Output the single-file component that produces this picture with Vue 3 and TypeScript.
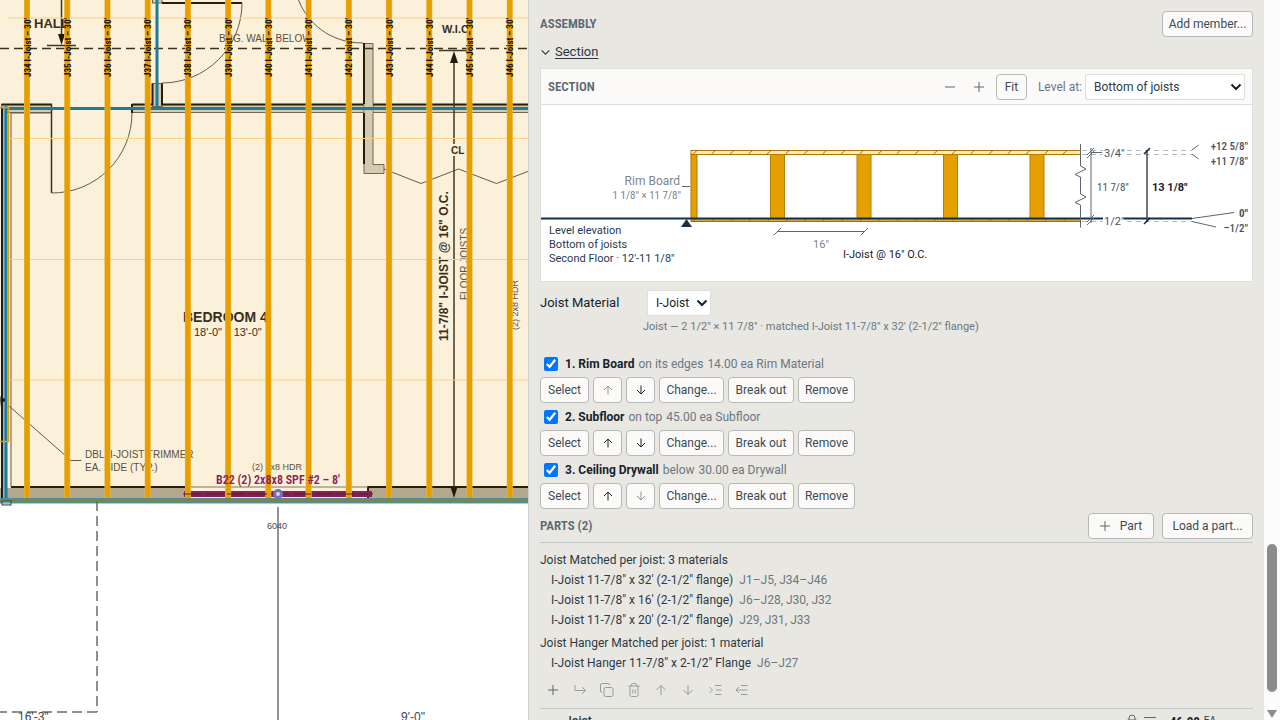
<script setup lang="ts">
import { ref } from 'vue'

interface Member {
  name: string
  position: string
  quantity: string
  enabled: boolean
}

interface Match {
  material: string
  joists: string
}

const joists = Array.from({ length: 13 }, (_, i) => ({ x: 27 + i * 40.23, label: `J${34 + i} I-Joist – 30'` }))
const gridLines = [18, 138.5, 259.5, 380]
const sectionJoists = [770.5, 857, 943.5, 1030]
const hatches = Array.from({ length: 21 }, (_, i) => 693 + i * 18.5)

const levels = ['Bottom of joists', 'Top of joists', 'Top of subfloor']
const level = ref(levels[0])
const material = ref('I-Joist')
const sectionOpen = ref(true)

const members = ref<Member[]>([
  { name: 'Rim Board', position: 'on its edges', quantity: '14.00 ea Rim Material', enabled: true },
  { name: 'Subfloor', position: 'on top', quantity: '45.00 ea Subfloor', enabled: true },
  { name: 'Ceiling Drywall', position: 'below', quantity: '30.00 ea Drywall', enabled: true },
])

const joistMatches: Match[] = [
  { material: `I-Joist 11-7/8" x 32' (2-1/2" flange)`, joists: 'J1–J5, J34–J46' },
  { material: `I-Joist 11-7/8" x 16' (2-1/2" flange)`, joists: 'J6–J28, J30, J32' },
  { material: `I-Joist 11-7/8" x 20' (2-1/2" flange)`, joists: 'J29, J31, J33' },
]

const tools = [
  { name: 'Add', d: 'M8 3v10M3 8h10' },
  { name: 'Add child', d: 'M3 3v5.5h10.5M10 5l3.5 3.5-3.5 3.5' },
  { name: 'Duplicate', d: 'M6.5 5.5h6a1.5 1.5 0 0 1 1.5 1.5v6a1.5 1.5 0 0 1-1.5 1.5h-6a1.5 1.5 0 0 1-1.5-1.5v-6a1.5 1.5 0 0 1 1.5-1.5zM3 10.5a1.5 1.5 0 0 1-1.5-1.5V3A1.5 1.5 0 0 1 3 1.5h6a1.5 1.5 0 0 1 1.5 1.5' },
  { name: 'Delete', d: 'M2.5 4h11M4 4v9a1.5 1.5 0 0 0 1.5 1.5h5A1.5 1.5 0 0 0 12 13V4M5.5 4V2.8A1.3 1.3 0 0 1 6.8 1.5h2.4a1.3 1.3 0 0 1 1.3 1.3V4M6.8 7.5v4M9.2 7.5v4' },
  { name: 'Move up', d: 'M8 13V3.5M3.5 8L8 3.5 12.5 8' },
  { name: 'Move down', d: 'M8 3v9.5M3.5 8L8 12.5 12.5 8' },
  { name: 'Indent', d: 'M8 3.5h6.5M9 8h5.5M8 12.5h6.5M2.5 5L5.5 8 2.5 11' },
  { name: 'Outdent', d: 'M7 3.5h6.5M2.5 8h11M7 12.5h6.5M5 5L2 8l3 3' },
]

function move(index: number, step: number) {
  const list = members.value
  const [item] = list.splice(index, 1)
  list.splice(index + step, 0, item)
}
</script>

<template>
  <main class="workspace">
    <section class="plan" aria-label="Floor plan">
      <svg viewBox="0 0 528 720" preserveAspectRatio="xMinYMin slice">
        <rect width="528" height="500" fill="#fbf0da" />
        <g class="wall">
          <rect x="1.5" y="104.5" width="50" height="8" />
          <rect x="132" y="104.5" width="400" height="8" />
          <rect x="152.5" y="83.5" width="9.5" height="23" />
          <rect x="152.5" y="-2" width="9.5" height="5" />
          <path d="M364 43.5H373V164.5H384V173.5H364Z" />
          <rect x="364.5" y="103" width="8" height="11" stroke="none" />
        </g>
        <path class="heavy" d="M1.5 104.5H52M132 104.5H152.5V83.5M162 83.5V104.5H363.5M373 104.5H528M364 43V104M364 113V164M162 3H242M132 104V113" />
        <path d="M51.5 104V193" stroke="#3c311c" stroke-width="1.5" />
        <rect x="0" y="488" width="185" height="10" fill="#b3a88e" />
        <rect x="368" y="488" width="160" height="10" fill="#b3a88e" />
        <path class="heavy" d="M11 487H185M368 498V487H528" />
        <path d="M185 487H368" stroke="#81775f" fill="none" />
        <g class="thin">
          <path d="M242 3A80 80 0 0 1 162 83M132 113A80 80 0 0 1 51.5 193M298.500 0C307 22 329 43 363 43" />
          <path d="M384 169L421 183.5L458.5 169L496.5 183.5L529 171" />
          <path d="M9 406L71 460.5H81.5" />
          <path d="M0 396L5 436M11 487V113H51" />
        </g>
        <path d="M0 48.500H528" stroke="#3c311c" stroke-width="1.5" stroke-dasharray="9 5" fill="none" />
        <path d="M61.5 0V38M47 45.500H76M439 50.500H467M454 56V144M454 156V490" stroke="#43371f" stroke-width="1.5" fill="none" />
        <path d="M58 34H65L61.5 45ZM450 63H458L454 51ZM450.5 487H457.5L454 498Z" fill="#241a08" />

        <g class="plan-text">
          <text class="bold" x="34" y="28" font-size="13">HALL</text>
          <text class="bold" x="442" y="33" font-size="11">W.I.C.</text>
          <text class="faint" x="219" y="42" font-size="10">BRG. WALL BELOW</text>
          <text class="bold" x="451" y="154" font-size="10">CL</text>
          <text class="bold" x="183" y="322" font-size="14">BEDROOM 4</text>
          <text x="194" y="336" font-size="11">18'-0" x 13'-0"</text>
          <text class="bold" transform="translate(448 341) rotate(-90)" font-size="12">11-7/8" I-JOIST @ 16" O.C.</text>
          <text class="faint" transform="translate(468 300) rotate(-90)" font-size="10">FLOOR JOISTS</text>
          <text class="faint" transform="translate(518 330) rotate(-90)" font-size="9">(2) 2x8 HDR</text>
          <text class="faint" x="85" y="458" font-size="10">DBL. I-JOIST TRIMMER</text>
          <text class="faint" x="85" y="471" font-size="10">EA. SIDE (TYP.)</text>
          <text class="faint" x="252" y="470" font-size="9">(2) 2x8 HDR</text>
        </g>

        <path v-for="y in gridLines" :key="y" :d="`M8 ${y}H528`" stroke="#f5d38a" fill="none" />
        <path d="M6 108.500H528M157 0V108.500" stroke="#1f7b96" stroke-width="3" fill="none" />
        <rect x="184" y="491" width="188" height="6" fill="#8b1d57" />
        <g v-for="j in joists" :key="j.label">
          <path :d="`M${j.x} 0V498`" stroke="#f0b840" stroke-width="6" />
          <path :d="`M${j.x} 0V498`" stroke="#e69f00" stroke-width="5" />
        </g>
        <path d="M183 494H373" stroke="#54232c" stroke-dasharray="18 4" fill="none" />

        <path d="M2 108V500" stroke="#171c25" stroke-width="2" />
        <path d="M4 106V502" stroke="#91b9ce" stroke-width="2" />
        <path d="M6 106V502" stroke="#1f7b96" stroke-width="3" />
        <path d="M0 107.500H8.500V441.500H0" stroke="#e69f00" stroke-width="1.5" fill="none" />
        <circle cx="3" cy="400" r="2" fill="#171c25" />
        <rect x="0" y="498" width="528" height="6" fill="#a9cbe1" />
        <path d="M0 499H528M0 502H528" stroke="#2a7f8c" stroke-width="1.5" />
        <path d="M0 500.500H528" stroke="#8e812d" stroke-width="1.5" />
        <rect x="2" y="501" width="9" height="4" fill="#9eb4c7" fill-opacity=".5" stroke="#354555" />

        <circle cx="278" cy="494" r="5" fill="#756fb4" />
        <circle cx="278" cy="494" r="2" fill="#d1d7ed" />

        <path d="M278 507V720" stroke="#6a7277" stroke-width="1.5" />
        <path d="M97 501V712" stroke="#6b6b6b" stroke-width="1.5" stroke-dasharray="10 5" />
        <path d="M97 712H0" stroke="#6b6b6b" stroke-width="1.5" stroke-dasharray="10 5" />
        <g class="plan-text cool">
          <text x="267" y="529" font-size="9">6040</text>
          <text x="18" y="721" font-size="12">16'-3"</text>
          <text x="401" y="721" font-size="12">9'-0"</text>
        </g>

        <text v-for="j in joists" :key="j.x" class="tag" :transform="`translate(${j.x + 3.5} 77) rotate(-90)`">{{ j.label }}</text>
        <text class="tag beam" x="278" y="484">B22 (2) 2x8x8 SPF #2 – 8'</text>
      </svg>
    </section>

    <aside class="panel">
      <div class="content">
        <header class="bar">
          <h2>ASSEMBLY</h2>
          <button class="btn add" type="button">Add member...</button>
        </header>

        <button class="toggle" type="button" :aria-expanded="sectionOpen" @click="sectionOpen = !sectionOpen">
          <svg viewBox="0 0 10 10"><path d="M1.5 3L5 6.5 8.5 3" /></svg>
          <span>Section</span>
        </button>

        <section v-if="sectionOpen" class="card">
          <header class="card-head">
            <h3>SECTION</h3>
            <button class="zoom" type="button" aria-label="Zoom out"><svg viewBox="0 0 10 10"><path d="M0 5H10" /></svg></button>
            <button class="zoom" type="button" aria-label="Zoom in"><svg viewBox="0 0 10 10"><path d="M0 5H10M5 0V10" /></svg></button>
            <button class="btn fit" type="button">Fit</button>
            <label for="level">Level at:</label>
            <span class="select level">
              <select id="level" v-model="level"><option v-for="l in levels" :key="l">{{ l }}</option></select>
              <svg viewBox="0 0 12 12"><path d="M1.5 3.5L6 8 10.5 3.5" /></svg>
            </span>
          </header>
          <svg class="drawing" viewBox="541 105 711 176" role="img" aria-label="Joist section">
            <path d="M1082 150.500H1192M1082 154.500H1192M1082 221.500H1192" stroke="#b6b9bb" stroke-dasharray="5 4" fill="none" />
            <rect x="691" y="150.5" width="389.5" height="4" fill="#ffe8b5" stroke="#a87807" />
            <rect x="691" y="218.5" width="389.5" height="3" fill="#dca63a" stroke="#98701d" />
            <path v-for="x in hatches" :key="x" :d="`M${x} 154l4-3.5M${x} 221.5l3-3`" stroke="#a87807" />
            <rect x="691" y="154.5" width="6" height="64" fill="#e69f00" stroke="#a87807" />
            <rect v-for="x in sectionJoists" :key="x" :x="x" y="154.5" width="14" height="64" fill="#e69f00" stroke="#b57e05" />
            <path d="M541 218.500H1192" stroke="#12304b" stroke-width="2" />
            <path d="M681 227L686.5 219L692 227Z" fill="#1b3042" />
            <g class="dim">
              <path d="M682 186.5H690M777 231.5H864M774 235L781 228M861 235L868 228" />
              <path d="M1080.5 144V166L1086 169L1075 174.5L1080.5 177V194L1086 197L1075 202.5L1080.5 205V227.5" />
              <path d="M1091 148V223M1087 155L1094 148M1087 158L1094 151M1091 152.5H1102M1087 222L1094 215M1087 225L1094 218M1192 150L1198.5 145M1192 154L1198.5 159M1192 218.5L1234 212.5M1192 221.5L1216 227" />
            </g>
            <path d="M1147 150V222" stroke="#3f4b56" stroke-width="1.5" />
            <path d="M1144 154L1150 148M1144 224L1150 218" stroke="#1b2731" stroke-width="1.5" />
            <path d="M1103 153H1124M1103 220H1124" stroke="#fff" stroke-width="9" />
            <g class="note">
              <text class="large" x="680" y="185" text-anchor="end">Rim Board</text>
              <text class="narrow" x="681" y="199" text-anchor="end">1 1/8" × 11 7/8"</text>
              <text x="821" y="248" text-anchor="middle">16"</text>
            </g>
            <g class="note ink">
              <text x="549" y="234">Level elevation</text>
              <text x="549" y="248">Bottom of joists</text>
              <text x="549" y="262">Second Floor · 12'-11 1/8"</text>
              <text class="black" x="843" y="258">I-Joist @ 16" O.C.</text>
            </g>
            <g class="note dark">
              <text x="1104" y="157">3/4"</text>
              <text class="narrow" x="1097" y="191">11 7/8"</text>
              <text x="1104" y="225">1/2"</text>
              <text class="total" x="1152" y="191">13 1/8"</text>
            </g>
            <g class="elev">
              <text x="1248" y="150">+12 5/8"</text>
              <text x="1248" y="165">+11 7/8"</text>
              <text class="zero" x="1248" y="217">0"</text>
              <text x="1248" y="232">–1/2"</text>
            </g>
          </svg>
        </section>

        <div class="field">
          <label for="material">Joist Material</label>
          <span class="select">
            <select id="material" v-model="material"><option>I-Joist</option><option>Lumber</option></select>
            <svg viewBox="0 0 12 12"><path d="M1.5 3.5L6 8 10.5 3.5" /></svg>
          </span>
        </div>
        <p class="hint">Joist — 2 1/2" × 11 7/8" · matched I-Joist 11-7/8" x 32' (2-1/2" flange)</p>

        <ul class="members">
          <li v-for="(m, i) in members" :key="m.name">
            <label class="member">
              <input v-model="m.enabled" type="checkbox" />
              <strong>{{ i + 1 }}. {{ m.name }}</strong>
              <span>{{ m.position }}</span>
              <span>{{ m.quantity }}</span>
            </label>
            <div class="actions">
              <button class="btn" type="button">Select</button>
              <button class="btn" type="button" aria-label="Move up" :disabled="i === 0" @click="move(i, -1)">
                <svg viewBox="0 0 12 12"><path d="M6 10.5V2M2 6L6 2 10 6" /></svg>
              </button>
              <button class="btn" type="button" aria-label="Move down" :disabled="i === members.length - 1" @click="move(i, 1)">
                <svg viewBox="0 0 12 12"><path d="M6 1.5V10M2 6L6 10 10 6" /></svg>
              </button>
              <button class="btn" type="button">Change...</button>
              <button class="btn" type="button">Break out</button>
              <button class="btn" type="button">Remove</button>
            </div>
          </li>
        </ul>

        <header class="bar parts">
          <h2>PARTS (2)</h2>
          <button class="btn part" type="button"><svg viewBox="0 0 10 10"><path d="M0 5H10M5 0V10" /></svg>Part</button>
          <button class="btn add" type="button">Load a part...</button>
        </header>

        <div class="matches">
          <p>Joist Matched per joist: 3 materials</p>
          <ul>
            <li v-for="m in joistMatches" :key="m.material">{{ m.material }} <span>{{ m.joists }}</span></li>
          </ul>
          <p>Joist Hanger Matched per joist: 1 material</p>
          <ul>
            <li>I-Joist Hanger 11-7/8" x 2-1/2" Flange <span>J6–J27</span></li>
          </ul>
        </div>

        <div class="tools">
          <button v-for="t in tools" :key="t.name" type="button" :aria-label="t.name"><svg viewBox="0 0 16 16"><path :d="t.d" /></svg></button>
        </div>

        <div class="row">
          <strong class="row-name">Joist</strong>
          <svg class="lock" viewBox="0 0 12 14"><path d="M3 6V4a3 3 0 0 1 6 0V6M1.500 6h9v7h-9z" /></svg>
          <span class="dash"></span>
          <strong class="amount">46.00</strong>
          <span class="unit">EA</span>
          <button type="button" aria-label="More"><svg viewBox="0 0 12 4"><circle cx="1.5" cy="2" r="1" /><circle cx="6" cy="2" r="1" /><circle cx="10.5" cy="2" r="1" /></svg></button>
        </div>
      </div>
      <div class="scroll">
        <div class="thumb"></div>
        <svg viewBox="0 0 10 8"><path d="M0 0H10L5 8Z" /></svg>
      </div>
    </aside>
  </main>
</template>

<style>
html,
body {
  margin: 0;
  overflow: hidden;
}
</style>

<style scoped>
* {
  box-sizing: border-box;
}
.workspace {
  display: grid;
  grid-template-columns: 33fr 47fr;
  height: 100vh;
  background: #fff;
  color: #2b3a47;
  font: 12px/18px Roboto, "Liberation Sans", sans-serif;
}
button,
select,
input {
  font: inherit;
  color: inherit;
}
button {
  padding: 0;
  border: 0;
  background: none;
}
svg {
  display: block;
  fill: none;
}
.plan {
  min-width: 0;
  overflow: hidden;
}
.plan svg {
  width: 100%;
  height: 100%;
}
.wall {
  fill: #d5c9b2;
  stroke: #71664f;
}
.heavy {
  fill: none;
  stroke: #281d08;
  stroke-width: 2;
}
.thin {
  fill: none;
  stroke: #675b44;
  stroke-width: 1;
}
.plan-text {
  fill: #3a2f1b;
  font-family: "Liberation Sans", Arial, sans-serif;
}
.plan-text .bold {
  font-weight: 700;
}
.plan-text .faint {
  fill: #5b503b;
}
.plan-text.cool {
  fill: #3e4850;
}
.tag {
  fill: #111;
  font: 700 9px "Roboto Condensed", "Liberation Sans Narrow", Roboto, sans-serif;
}
.tag.beam {
  fill: #8b1d57;
  font-size: 12px;
  font-weight: 600;
  text-anchor: middle;
}
.panel {
  display: flex;
  min-width: 0;
  overflow: hidden;
  border-left: 1px solid #cfd1cf;
  background: #e8e7e2;
}
.content {
  flex: 1;
  min-width: 0;
  padding: 11px 11px 0;
}
.scroll {
  display: flex;
  flex: 0 0 16px;
  flex-direction: column;
  align-items: center;
  justify-content: flex-end;
  gap: 18px;
  background: #fcfcfc;
}
.thumb {
  width: 10px;
  height: 148px;
  border-radius: 5px;
  background: #8b8d8b;
}
.scroll svg {
  width: 10px;
  height: 8px;
  margin-bottom: 2px;
  fill: #8b8d8b;
}
.bar {
  display: flex;
  align-items: center;
  gap: 8px;
}
h2,
h3 {
  flex: 1;
  margin: 0;
  color: #5a6873;
  font: 600 13px/20px "Roboto Condensed", "Liberation Sans Narrow", Roboto, sans-serif;
}
.btn {
  display: flex;
  align-items: center;
  justify-content: center;
  height: 26px;
  border: 1px solid #b5bab9;
  border-radius: 4px;
  background: #fbfaf9;
  color: #3b4a57;
  white-space: nowrap;
}
.btn.add {
  width: 91px;
}
.toggle {
  display: flex;
  align-items: center;
  gap: 4px;
  height: 20px;
  margin-top: 5px;
  font-size: 13px;
}
.toggle span {
  text-decoration: underline;
  text-underline-offset: 2px;
}
.toggle svg {
  width: 11px;
  height: 11px;
  stroke: #2b3a47;
}
.card {
  margin-top: 6px;
  border: 1px solid #dcdfde;
  background: #fff;
}
.card-head {
  display: flex;
  align-items: center;
  height: 36px;
  padding: 0 7px;
  border-bottom: 1px solid #dcdfde;
  background: #fbfaf9;
}
.card-head label {
  margin: 0 3px 0 11px;
  color: #6c7781;
}
.zoom {
  display: flex;
  justify-content: center;
  width: 29px;
}
.zoom svg,
.part svg {
  width: 10px;
  height: 10px;
  stroke: #5a6873;
}
.fit {
  width: 31px;
  margin-left: 2px;
}
.select {
  position: relative;
}
.select select {
  display: block;
  width: 64px;
  height: 26px;
  padding: 0 8px;
  border: 1px solid #dcdfde;
  border-radius: 2px;
  background: #fff;
  appearance: none;
}
.select.level select {
  width: 160px;
}
.select svg {
  position: absolute;
  top: 7px;
  right: 3px;
  width: 12px;
  height: 12px;
  stroke: #17222c;
  stroke-width: 2;
  pointer-events: none;
}
.drawing {
  width: 100%;
}
.dim {
  stroke: #5a6671;
}
.note {
  fill: #7d868e;
  font-size: 11px;
}
.note .large {
  font-size: 12px;
}
.note .narrow {
  font-family: "Roboto Condensed", "Liberation Sans Narrow", Roboto, sans-serif;
}
.note.ink {
  fill: #1f3a52;
}
.note .black {
  fill: #17222c;
}
.note.dark {
  fill: #46525d;
}
.note .total {
  fill: #17222c;
  font-size: 11px;
  font-weight: 700;
}
.elev {
  fill: #46525d;
  font: 500 11px "Roboto Condensed", "Liberation Sans Narrow", Roboto, sans-serif;
  text-anchor: end;
}
.elev .zero {
  font-weight: 700;
}
.field {
  display: flex;
  align-items: center;
  margin-top: 8px;
  color: #17222c;
}
.field label {
  width: 107px;
  font-size: 13px;
}
.hint {
  margin: 2px 0 0 103px;
  color: #6c7781;
  font-size: 11px;
}
ul {
  margin: 0;
  padding: 0;
  list-style: none;
}
.members {
  margin-top: 18px;
}
.members li {
  margin-bottom: 4px;
}
.member {
  display: flex;
  align-items: center;
  gap: 4px;
  height: 19px;
  margin-bottom: 4px;
  color: #6c7781;
}
.member input {
  width: 14px;
  height: 14px;
  margin: 0 3px 0 4px;
  accent-color: #0075ff;
}
.member strong {
  color: #17222c;
}
.actions {
  display: grid;
  grid-template-columns: 49px 29px 29px 65px 66px 57px;
  gap: 4px;
}
.actions svg {
  width: 12px;
  height: 12px;
  stroke: #17222c;
}
.btn:disabled svg {
  stroke: #8f979d;
}
.parts {
  padding-bottom: 3px;
  border-bottom: 1px solid #c3c9c7;
}
.part {
  gap: 10px;
  width: 66px;
}
.matches {
  padding-top: 8px;
}
.matches p {
  margin: 0;
  line-height: 19px;
}
.matches ul {
  padding-left: 11px;
  margin-bottom: 4px;
}
.matches li {
  line-height: 20px;
}
.matches li span {
  margin-left: 3px;
  color: #6c7781;
}
.tools {
  display: flex;
  gap: 11px;
  padding: 5px 5px 10px;
  border-bottom: 1px solid #c3c9c7;
}
.tools svg {
  width: 16px;
  height: 16px;
  stroke: #959da2;
}
.tools button:first-child svg {
  stroke: #5a6873;
}
.row {
  display: flex;
  align-items: center;
  height: 24px;
  padding: 0 5px 0 25px;
}
.row-name {
  flex: 1;
  font-weight: 500;
}
.lock {
  width: 12px;
  height: 14px;
  stroke: #5a6873;
}
.dash {
  width: 12px;
  height: 1px;
  margin: 0 14px 8px 6px;
  background: #5a6873;
}
.amount {
  color: #17222c;
  font: 700 13px "Roboto Condensed", "Liberation Sans Narrow", Roboto, sans-serif;
}
.unit {
  margin: 0 20px 0 4px;
  font-size: 10px;
}
.row button svg {
  width: 12px;
  height: 4px;
  fill: #6c7781;
}
</style>
